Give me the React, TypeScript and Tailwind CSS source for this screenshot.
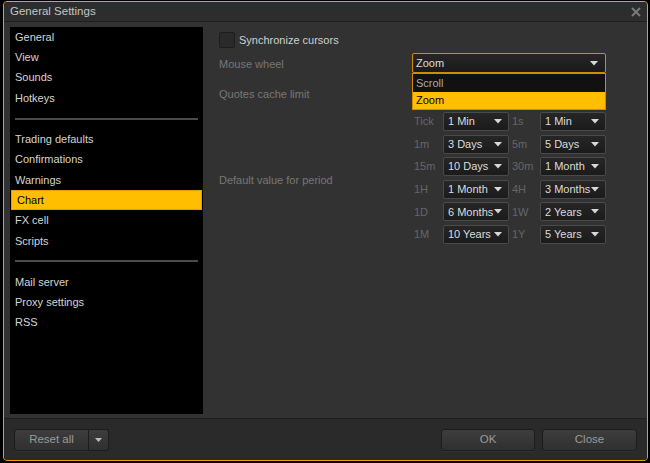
import React from "react";

const menuGroups = [
  ["General", "View", "Sounds", "Hotkeys"],
  ["Trading defaults", "Confirmations", "Warnings", "Chart", "FX cell", "Scripts"],
  ["Mail server", "Proxy settings", "RSS"],
];

const periods: [string, string, string, string][] = [
  ["Tick", "1 Min", "1s", "1 Min"],
  ["1m", "3 Days", "5m", "5 Days"],
  ["15m", "10 Days", "30m", "1 Month"],
  ["1H", "1 Month", "4H", "3 Months"],
  ["1D", "6 Months", "1W", "2 Years"],
  ["1M", "10 Years", "1Y", "5 Years"],
];

function Arrow() {
  return (
    <svg width="8" height="5" viewBox="0 0 8 5" className="shrink-0">
      <path d="M0 0 L8 0 L4 4.5 Z" fill="#d8d8d8" />
    </svg>
  );
}

function Select({ value }: { value: string }) {
  return (
    <div className="h-[19px] flex items-center justify-between pl-[4px] pr-[6px] rounded-[2px] border border-[#4a4a4a] bg-gradient-to-b from-[#262626] to-[#1b1b1b] text-[#dcdcdc] whitespace-nowrap overflow-hidden">
      <span>{value}</span>
      <Arrow />
    </div>
  );
}

function Button({ label, className = "" }: { label: string; className?: string }) {
  return (
    <button className={`h-[22px] rounded-[3px] border border-[#1c1c1c] bg-gradient-to-b from-[#3d3d3d] to-[#303030] text-[#9a9a9a] text-[11.5px] shadow-[0_1px_0_rgba(255,255,255,0.04)] ${className}`}>
      {label}
    </button>
  );
}

export default function App() {
  return (
    <div
      className="w-[650px] h-[463px] bg-black pt-[1px] pl-[3px] pr-[2px] pb-[2px] text-[11px]"
      style={{ fontFamily: '"Liberation Sans", Arial, sans-serif' }}
    >
      <div className="h-full flex flex-col border border-[#e9a200] rounded-[4px] bg-[#323232] overflow-hidden">
        {/* Title bar */}
        <div className="h-[20px] shrink-0 flex items-center justify-between pl-[6px] pr-[6px] bg-[#2d2d2d] border-b border-[#1f1f1f] text-[#c4c4c4] text-[11.5px]">
          <span>General Settings</span>
          <svg width="10" height="10" viewBox="0 0 10 10">
            <path d="M1 1 L9 9 M9 1 L1 9" stroke="#7a7a7a" strokeWidth="2" />
          </svg>
        </div>

        {/* Body */}
        <div className="flex-1 flex pt-[5px] pb-[4px] pl-[6px]">
          {/* Sidebar */}
          <div className="w-[193px] bg-black">
            {menuGroups.map((group, gi) => (
              <div key={gi}>
                {gi > 0 && (
                  <div className="h-[21px] flex items-center px-[5px]">
                    <div className="w-full h-[2px] bg-[#4a4a4a]" />
                  </div>
                )}
                {group.map((item) => (
                  <div
                    key={item}
                    className={`h-[20.3px] flex items-center pl-[5px] ${
                      item === "Chart"
                        ? "bg-[#ffbf00] text-black mx-[1px] pl-[4px] border border-[#e0a000]"
                        : "text-[#d4d4d4]"
                    }`}
                  >
                    {item}
                  </div>
                ))}
              </div>
            ))}
          </div>

          {/* Content */}
          <div className="flex-1 pl-[16px] pr-[41px] pt-[5px] flex flex-col">
            <div className="h-[16px] flex items-center gap-[4px] text-[#cfcfcf]">
              <div className="w-[16px] h-[16px] rounded-[2px] bg-[#2a2a2a] border border-[#1d1d1d]" />
              <span>Synchronize cursors</span>
            </div>

            <div className="mt-[5px] h-[20px] flex items-center justify-between">
              <span className="text-[#777] pt-[3px]">Mouse wheel</span>
              <div className="relative w-[194px]">
                <div className="h-[20px] flex items-center justify-between pl-[3px] pr-[7px] rounded-[2px] border border-[#d38c00] bg-gradient-to-b from-[#262626] to-[#1a1a1a] text-[#dcdcdc]">
                  <span>Zoom</span>
                  <Arrow />
                </div>
                <div className="absolute left-0 right-0 top-[20px] border border-[#d38c00] z-10">
                  <div className="h-[18px] flex items-center pl-[3px] bg-[#111] text-[#aaa]">Scroll</div>
                  <div className="h-[17px] flex items-center pl-[3px] bg-[#ffbf00] text-black">Zoom</div>
                </div>
              </div>
            </div>

            <div className="mt-[11px] h-[20px] flex items-center justify-between">
              <span className="text-[#777]">Quotes cache limit</span>
            </div>

            <div className="mt-[8px] flex items-center justify-between">
              <span className="text-[#777] pt-[4px]">Default value for period</span>
              <div className="w-[194px] grid grid-cols-[31px_66px_31px_66px] gap-y-[3.6px]">
                {periods.map(([l1, v1, l2, v2]) => (
                  <React.Fragment key={l1}>
                    <span className="pl-[2px] flex items-center text-[#666]">{l1}</span>
                    <Select value={v1} />
                    <span className="pl-[3px] flex items-center text-[#666]">{l2}</span>
                    <Select value={v2} />
                  </React.Fragment>
                ))}
              </div>
            </div>
          </div>
        </div>

        {/* Footer */}
        <div className="h-[42px] shrink-0 flex items-start justify-between pt-[10px] px-[10px] bg-[#2a2a2a] border-t border-[#1e1e1e]">
          <div className="flex">
            <Button label="Reset all" className="w-[75px] rounded-r-none" />
            <button className="h-[22px] w-[20px] flex items-center justify-center rounded-[3px] rounded-l-none border border-l-0 border-[#1c1c1c] bg-gradient-to-b from-[#3d3d3d] to-[#303030]">
              <svg width="7" height="4" viewBox="0 0 7 4">
                <path d="M0 0 L7 0 L3.5 4 Z" fill="#bbb" />
              </svg>
            </button>
          </div>
          <div className="flex gap-[7px]">
            <Button label="OK" className="w-[94px]" />
            <Button label="Close" className="w-[95px]" />
          </div>
        </div>
      </div>
    </div>
  );
}
